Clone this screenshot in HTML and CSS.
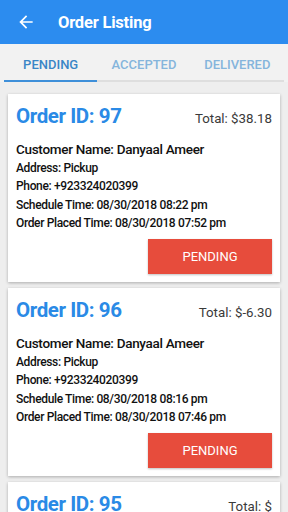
FILE: index.html
```html
<!DOCTYPE html>
<html lang="en">
<head>
    <meta charset="UTF-8">
    <title>Order Listing</title>
    <link rel="stylesheet" href="styles.css">
</head>
<body>
    <div class="header">
        <div class="back">
            <svg width="20" height="20" viewBox="0 0 24 24"><path fill="#fff" d="M20 11H7.83l5.59-5.59L12 4l-8 8 8 8 1.41-1.41L7.830 13H20v-2z"/></svg>
        </div>
        <div class="title">Order Listing</div>
    </div>

    <div class="tabs">
        <div class="tab active">PENDING</div>
        <div class="tab">ACCEPTED</div>
        <div class="tab">DELIVERED</div>
    </div>

    <div class="list">
        <div class="card">
            <div class="card-head">
                <div class="order-id">Order ID: 97</div>
                <div class="total">Total: $38.18</div>
            </div>
            <div class="customer">Customer Name: Danyaal Ameer</div>
            <div class="info">Address: Pickup</div>
            <div class="info">Phone: +923324020399</div>
            <div class="info">Schedule Time: 08/30/2018 08:22 pm</div>
            <div class="info">Order Placed Time: 08/30/2018 07:52 pm</div>
            <div class="card-foot">
                <div class="status-btn">PENDING</div>
            </div>
        </div>

        <div class="card">
            <div class="card-head">
                <div class="order-id">Order ID: 96</div>
                <div class="total">Total: $-6.30</div>
            </div>
            <div class="customer">Customer Name: Danyaal Ameer</div>
            <div class="info">Address: Pickup</div>
            <div class="info">Phone: +923324020399</div>
            <div class="info">Schedule Time: 08/30/2018 08:16 pm</div>
            <div class="info">Order Placed Time: 08/30/2018 07:46 pm</div>
            <div class="card-foot">
                <div class="status-btn">PENDING</div>
            </div>
        </div>

        <div class="card">
            <div class="card-head">
                <div class="order-id">Order ID: 95</div>
                <div class="total">Total: $</div>
            </div>
        </div>
    </div>
</body>
</html>
```

FILE: styles.css
```css
/*Base*/
body {
    margin: 0;
    padding: 0;
    background-color: #eeeeee;
    font-family: Roboto, "Noto Sans", sans-serif;
    color: #111;
    height: 512px;
    overflow: hidden;
}

/*Header*/
.header {
    display: flex;
    flex-direction: row;
    align-items: center;
    height: 44px;
    background-color: #2c8cef;
    color: white;
}

.back {
    display: flex;
    padding-left: 16px;
    width: 20px;
}

.title {
    margin-left: 22px;
    font-size: 16.5px;
    font-weight: 700;
    letter-spacing: -0.2px;
    padding-top: 1px;
}

/*Tabs*/
.tabs {
    display: flex;
    flex-direction: row;
    padding: 0 4px;
    background-color: #f2f2f2;
}

.tab {
    flex: 1;
    height: 36px;
    line-height: 41px;
    text-align: center;
    font-size: 13px;
    font-weight: 500;
    color: #85b5dc;
    border-bottom: 2px solid #dedede;
}

.tab.active {
    color: #3a86c6;
    border-bottom-color: #3e8fd9;
}

/*Cards*/
.list {
    padding: 12px 8px 0;
    display: flex;
    flex-direction: column;
    gap: 6px;
}

.card {
    background-color: white;
    padding: 10px 8px 11px;
    box-shadow: 0 1px 3px rgba(0, 0, 0, 0.28);
    height: 167px;
    flex-shrink: 0;
}

.card-head {
    display: flex;
    flex-direction: row;
    justify-content: space-between;
    align-items: baseline;
    line-height: 24px;
}

.order-id {
    font-size: 20.5px;
    font-weight: 700;
    letter-spacing: -0.4px;
    color: #2a8ae6;
}

.total {
    font-size: 13.3px;
    color: #3a3a3a;
}

.customer {
    margin-top: 9px;
    font-size: 13.5px;
    font-weight: 500;
    letter-spacing: -0.3px;
    line-height: 18px;
    margin-bottom: 1px;
}

.info {
    font-size: 12px;
    font-weight: 500;
    letter-spacing: -0.35px;
    line-height: 18.4px;
}

.card-foot {
    display: flex;
    justify-content: flex-end;
    margin-top: 6px;
}

.status-btn {
    width: 124px;
    height: 35px;
    line-height: 35px;
    text-align: center;
    background-color: #e74c3c;
    color: white;
    font-size: 13px;
    box-shadow: 0 1px 2px rgba(0, 0, 0, 0.25);
}
```
